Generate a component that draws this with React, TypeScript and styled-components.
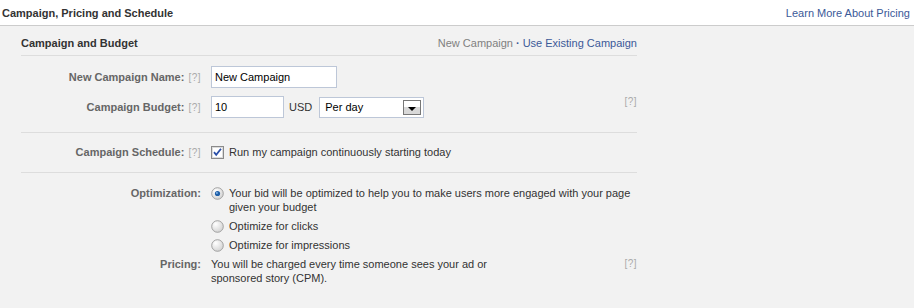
import React from 'react';
import styled, {createGlobalStyle} from 'styled-components';

const Global = createGlobalStyle`
  html, body {
    margin: 0;
    padding: 0;
    background: #fff;
  }
  body {
    font-family: 'Liberation Sans', Arial, sans-serif;
    font-size: 11px;
    color: #333;
  }
`;

const Page = styled.div`
  width: 914px;
  height: 308px;
  overflow: hidden;
`;

const TopBar = styled.div`
  display: flex;
  align-items: center;
  justify-content: space-between;
  height: 25px;
  padding: 0 4px 0 2px;
  border-bottom: 1px solid #ccc;
`;

const Title = styled.div`
  font-weight: bold;
  color: #333;
`;

const Link = styled.a`
  color: #3b5998;
  text-decoration: none;
  cursor: pointer;
`;

const Panel = styled.div`
  background: #f2f2f2;
  height: 282px;
  padding-left: 21px;
`;

const Inner = styled.div`
  width: 616px;
`;

const SubHeader = styled.div`
  display: flex;
  justify-content: space-between;
  box-sizing: border-box;
  height: 30px;
  padding-top: 4px;
  line-height: 26px;
  border-bottom: 1px solid #ddd;
`;

const SubTitle = styled.div`
  font-weight: bold;
  color: #333;
`;

const Muted = styled.span`
  color: #808080;
`;

const Dot = styled.span`
  color: #3b5998;
  font-weight: bold;
  margin: 0 3px;
`;

const Section = styled.div<{$top: number; $bottom: number; $gap: number; $line?: boolean}>`
  display: flex;
  flex-direction: column;
  gap: ${p => p.$gap}px;
  padding: ${p => p.$top}px 0 ${p => p.$bottom}px;
  border-bottom: ${p => (p.$line ? '1px solid #ddd' : 'none')};
`;

const Row = styled.div<{$align?: string; $lh?: number}>`
  display: grid;
  grid-template-columns: 180px 1fr;
  column-gap: 10px;
  align-items: ${p => p.$align || 'center'};
  line-height: ${p => p.$lh || 15}px;
`;

const Label = styled.div`
  text-align: right;
  font-weight: bold;
  color: #666;
  white-space: nowrap;
`;

const Help = styled.span<{$right?: boolean}>`
  font-weight: normal;
  color: #aaa;
  margin-left: ${p => (p.$right ? '0' : '4px')};
  font-size: 10px;
  letter-spacing: 0.5px;
`;

const Control = styled.div`
  display: flex;
  align-items: center;
  gap: 5px;
  color: #333;
`;

const TextInput = styled.input<{$w: number}>`
  box-sizing: border-box;
  width: ${p => p.$w}px;
  height: 22px;
  border: 1px solid #bdc7d8;
  background: #fff;
  padding: 0 3px;
  font-family: inherit;
  font-size: 11px;
  color: #000;
  outline: none;
`;

const Unit = styled.span`
  color: #333;
  margin-right: 2px;
`;

const Select = styled.div`
  box-sizing: border-box;
  display: flex;
  align-items: center;
  justify-content: space-between;
  width: 105px;
  height: 21px;
  border: 1px solid #bdc7d8;
  background: #fff;
  padding: 0 2px 0 5px;
  color: #000;
`;

const Arrow = styled.span`
  box-sizing: border-box;
  display: flex;
  align-items: flex-end;
  justify-content: center;
  width: 18px;
  height: 15px;
  border: 1px solid #777;
  background: linear-gradient(#fff 0 45%, #d8d8d8 45% 100%);
  padding-bottom: 3px;

  &::after {
    content: '';
    border-left: 4px solid transparent;
    border-right: 4px solid transparent;
    border-top: 4px solid #000;
  }
`;

const Spacer = styled.div`
  flex: 1;
`;

const TopHelp = styled.div`
  align-self: flex-start;
  line-height: 10px;
`;

const Option = styled.label`
  display: flex;
  align-items: flex-start;
  gap: 5px;
  color: #333;
  cursor: pointer;
`;

const IconBox = styled.span`
  flex: none;
  display: flex;
  margin-top: 1px;
`;

const Para = styled.div`
  color: #333;
`;

const SplitRow = styled.div`
  display: flex;
  justify-content: space-between;
`;

const Checkbox = () => (
  <svg width="13" height="13" viewBox="0 0 13 13">
    <rect x="0.5" y="0.5" width="12" height="12" fill="#f4f4f4" stroke="#8a8a8a" />
    <rect x="1.5" y="1.5" width="10" height="10" fill="#fff" stroke="#dcdcdc" />
    <path d="M3 6.2 L5.2 8.8 L10 2.8" fill="none" stroke="#2a4fa8" strokeWidth="1.8" />
  </svg>
);

const Radio = ({on}: {on?: boolean}) => (
  <svg width="13" height="13" viewBox="0 0 13 13">
    <defs>
      <radialGradient id={on ? 'rg-on' : 'rg-off'} cx="0.35" cy="0.3" r="0.8">
        <stop offset="0" stopColor="#fff" />
        <stop offset="1" stopColor="#cfcfcf" />
      </radialGradient>
    </defs>
    <circle cx="6.5" cy="6.5" r="5.8" fill={`url(#${on ? 'rg-on' : 'rg-off'})`} stroke="#9a9a9a" strokeWidth="0.9" />
    {on && <circle cx="6.5" cy="6.5" r="2.6" fill="#1f5fa8" />}
    {on && <circle cx="5.9" cy="5.9" r="0.9" fill="#8fc0ef" />}
  </svg>
);

export default function App() {
  return (
    <Page>
      <Global />
      <TopBar>
        <Title>Campaign, Pricing and Schedule</Title>
        <Link>Learn More About Pricing</Link>
      </TopBar>
      <Panel>
        <Inner>
          <SubHeader>
            <SubTitle>Campaign and Budget</SubTitle>
            <div>
              <Muted>New Campaign</Muted>
              <Dot>·</Dot>
              <Link>Use Existing Campaign</Link>
            </div>
          </SubHeader>

          <Section $top={10} $bottom={14} $gap={8} $line>
            <Row>
              <Label>
                New Campaign Name:<Help>[?]</Help>
              </Label>
              <Control>
                <TextInput $w={126} defaultValue="New Campaign" />
              </Control>
            </Row>
            <Row>
              <Label>
                Campaign Budget:<Help>[?]</Help>
              </Label>
              <Control>
                <TextInput $w={73} defaultValue="10" />
                <Unit>USD</Unit>
                <Select>
                  Per day
                  <Arrow />
                </Select>
                <Spacer />
                <TopHelp>
                  <Help $right>[?]</Help>
                </TopHelp>
              </Control>
            </Row>
          </Section>

          <Section $top={12} $bottom={12} $gap={0} $line>
            <Row>
              <Label>
                Campaign Schedule:<Help>[?]</Help>
              </Label>
              <Option>
                <IconBox>
                  <Checkbox />
                </IconBox>
                Run my campaign continuously starting today
              </Option>
            </Row>
          </Section>

          <Section $top={13} $bottom={0} $gap={5}>
            <Row $align="start" $lh={14}>
              <Label>Optimization:</Label>
              <Option>
                <IconBox>
                  <Radio on />
                </IconBox>
                <span>
                  Your bid will be optimized to help you to make users more engaged with your page
                  <br />
                  given your budget
                </span>
              </Option>
            </Row>
            <Row $lh={14}>
              <div />
              <Option>
                <IconBox>
                  <Radio />
                </IconBox>
                Optimize for clicks
              </Option>
            </Row>
            <Row $lh={14}>
              <div />
              <Option>
                <IconBox>
                  <Radio />
                </IconBox>
                Optimize for impressions
              </Option>
            </Row>
            <Row $align="start" $lh={14}>
              <Label>Pricing:</Label>
              <SplitRow>
                <Para>
                  You will be charged every time someone sees your ad or
                  <br />
                  sponsored story (CPM).
                </Para>
                <Help $right>[?]</Help>
              </SplitRow>
            </Row>
          </Section>
        </Inner>
      </Panel>
    </Page>
  );
}
